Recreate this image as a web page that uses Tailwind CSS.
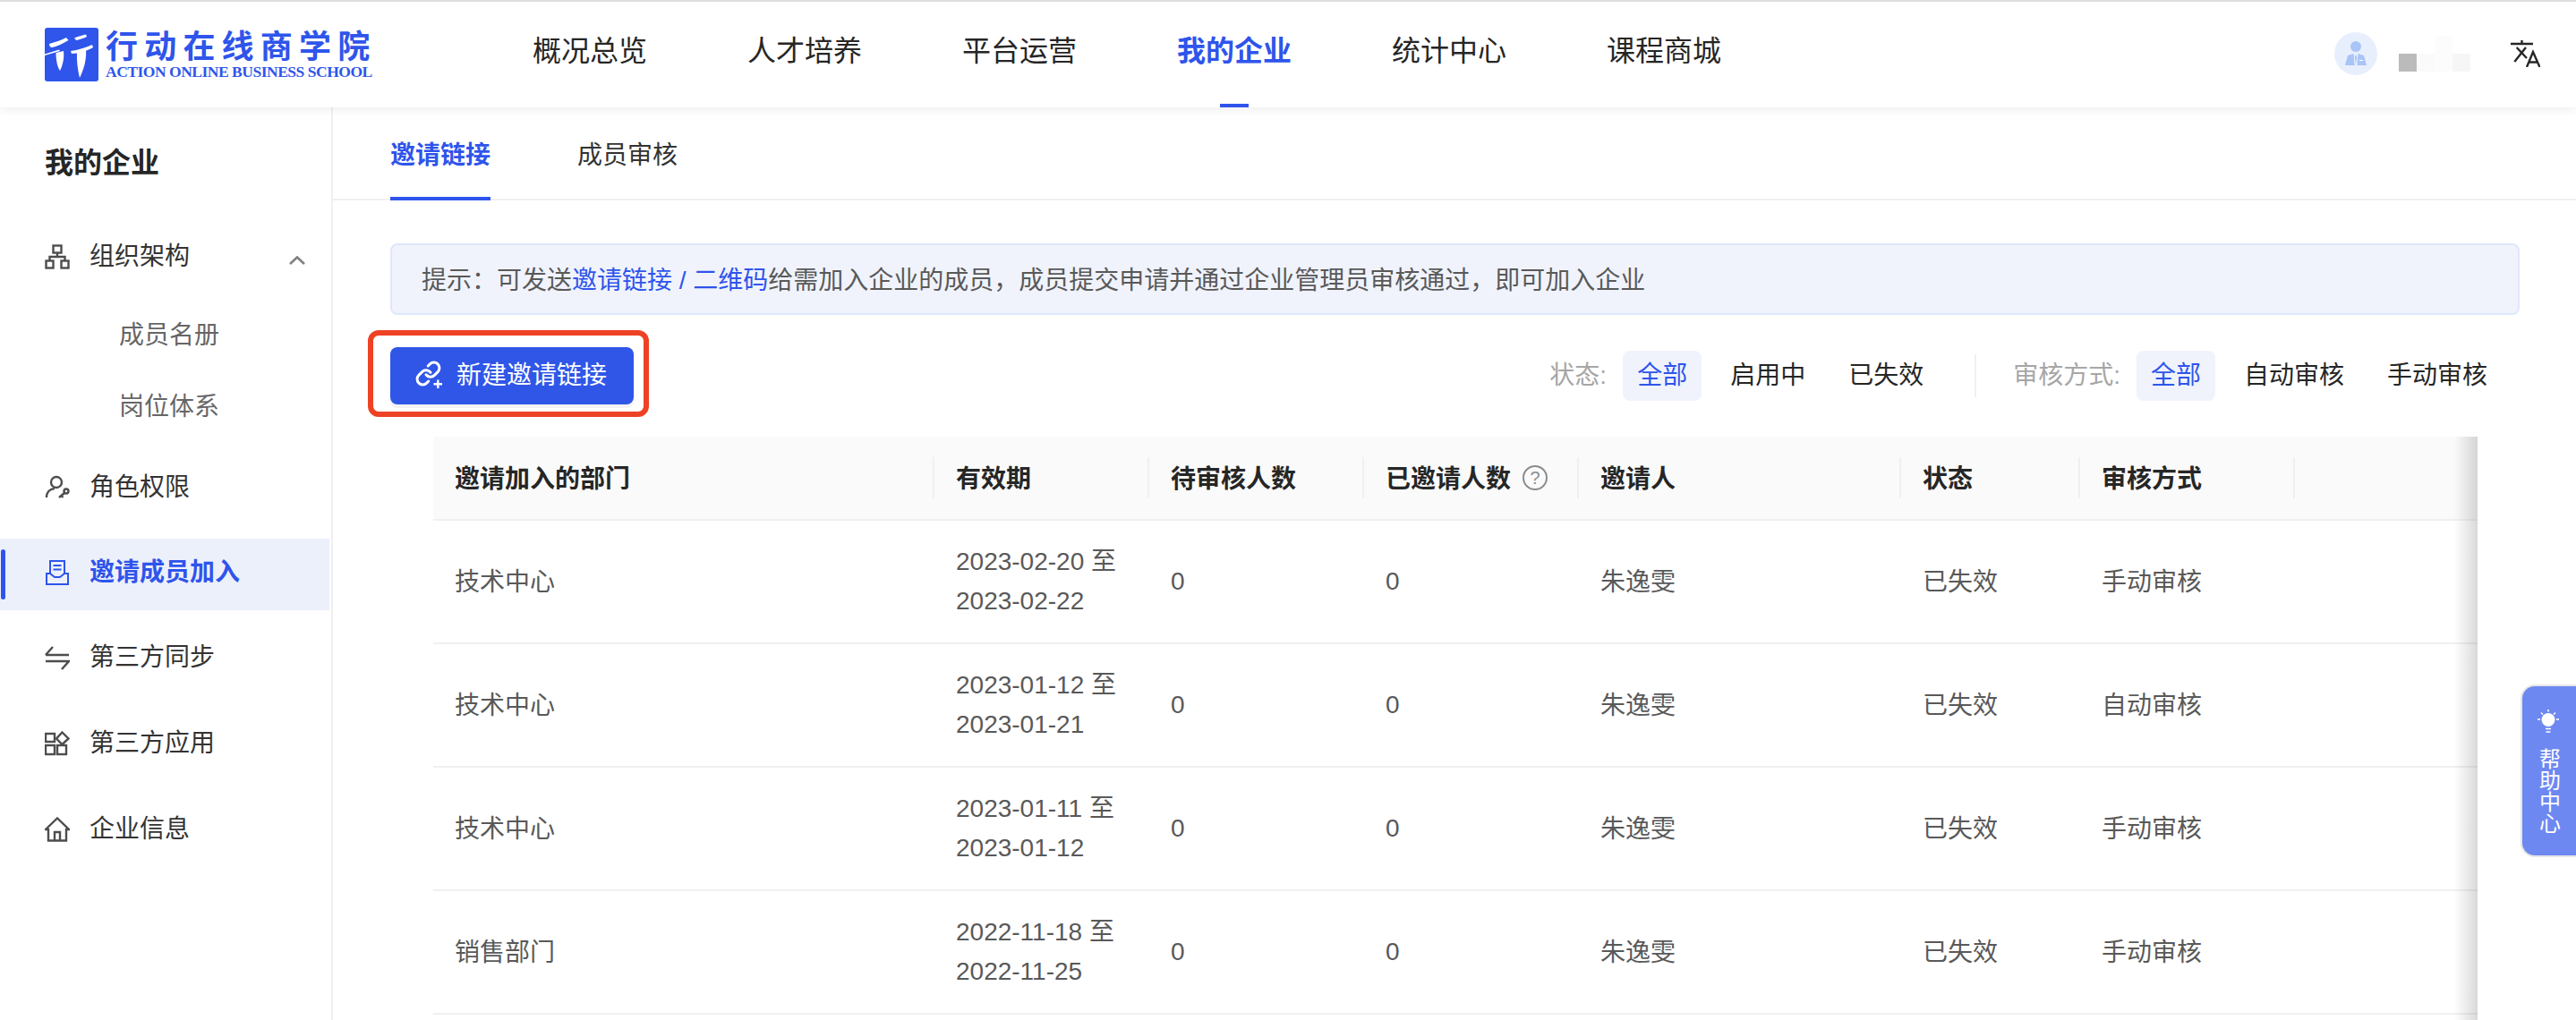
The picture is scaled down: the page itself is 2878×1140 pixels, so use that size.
<!DOCTYPE html>
<html lang="zh-CN">
  <head>
    <meta charset="UTF-8" />
    <title>邀请链接</title>
    <script src="https://cdn.jsdelivr.net/npm/@tailwindcss/browser@4"></script>
  </head>
  <body class="bg-white font-['Liberation_Sans','Noto_Sans_CJK_SC',sans-serif] text-[#262626]">
    <div class="relative flex flex-col w-[2878px] h-[1140px] overflow-hidden">
      <!-- top bar -->
      <header class="relative z-10 flex items-center h-[120px] shrink-0 border-t-2 border-[#dedede] bg-white shadow-[0_2px_10px_rgba(0,0,0,0.08)]">
        <div class="flex items-center w-[595px] shrink-0 pl-[50px]">
          <svg class="w-[60px] h-[60px] shrink-0" viewBox="0 0 60 60">
            <rect width="60" height="60" rx="3" fill="#2f55eb" />
            <g fill="#fff">
              <path d="M5 18 C11 16 19 14 24 11 L26.5 14 C20 18 13 21 8 22 C6 22 5 20 5 18 Z" />
              <path d="M33 11.5 C37 10 42 8 46 7.5 L47 10 C43 12 38 13.5 35 14 Z" />
              <path d="M0 29.5 L16 24.5 L17 26 L0 31 Z" />
              <path d="M29 26 C37 25 46 22 53 19 L54 22 C47 26 38 29 30 29 Z" />
              <path d="M12.5 28 L21 26 C22 34 20 42 17 48 C14 44 12.5 36 12.5 28 Z" />
              <path d="M36 28 L46 25 C47 36 43 48 39 56 C37 48 35.5 37 36 28 Z" />
            </g>
          </svg>
          <div class="ml-2 flex flex-col text-[#2f55eb]">
            <span class="text-[36px] leading-[38px] font-bold tracking-[7.2px] whitespace-nowrap">行动在线商学院</span>
            <span class="font-['Liberation_Serif',serif] text-[17.5px] leading-[17px] font-bold tracking-[-0.48px] whitespace-nowrap">ACTION ONLINE BUSINESS SCHOOL</span>
          </div>
        </div>
        <nav class="flex h-full gap-[112px] text-[32px]">
          <a class="flex items-center pb-2">概况总览</a>
          <a class="flex items-center pb-2">人才培养</a>
          <a class="flex items-center pb-2">平台运营</a>
          <a class="relative flex items-center pb-2 font-semibold text-[#2f54eb]">
            我的企业
            <span class="absolute left-[48px] bottom-0 w-8 h-1 bg-[#2f54eb]"></span>
          </a>
          <a class="flex items-center pb-2">统计中心</a>
          <a class="flex items-center pb-2">课程商城</a>
        </nav>
        <div class="ml-auto flex items-center pr-[40px] pb-[2px]">
          <div class="w-12 h-12 rounded-full bg-[#e8effc]">
            <svg class="w-12 h-12" viewBox="0 0 48 48" fill="#a9c4f6">
              <circle cx="24" cy="16" r="6" />
              <path d="M12 37 L15 26 L21.5 24 L22.5 37 Z" />
              <path d="M36 37 L33 26 L26.5 24 L25.5 37 Z" />
              <path d="M24 25 L22.8 28 L24 36 L25.2 28 Z" />
              <rect x="28" y="31" width="4" height="1" fill="#fff" />
            </svg>
          </div>
          <!-- blurred user name -->
          <div class="ml-6 grid grid-cols-[20px_20px_20px_20px] grid-rows-[20px_20px] w-[80px] h-10">
            <span></span><span></span><span class="bg-[#fcfcfc]"></span><span></span>
            <span class="bg-[#bbbbbb]"></span><span class="bg-[#fafafa]"></span><span class="bg-[#fcfcfc]"></span><span class="bg-[#f6f6f6]"></span>
          </div>
          <svg class="ml-[45px] w-[33px] h-[30px]" viewBox="0 0 33 30" fill="none" stroke="#262626" stroke-width="2.4">
            <path d="M0 4 H25 M12.5 0 V4 M6.7 8 L18 20 M17 8 L4.3 24" />
            <path d="M18 30 L25 13 L32.5 30 M20.5 24.5 H30" />
          </svg>
        </div>
      </header>

      <div class="flex flex-1 min-h-0">
        <!-- sidebar -->
        <aside class="w-[372px] shrink-0 border-r-2 border-[#f0f0f0] text-[28px] text-[#333]">
          <h2 class="pt-10 pl-[50px] text-[32px] leading-[44px] font-semibold text-[#262626]">我的企业</h2>
          <div class="mt-[43px] flex items-center w-[368px] h-20 pl-[50px]">
            <svg class="w-7 h-7" viewBox="0 0 28 28" fill="none" stroke="#4d4d4d" stroke-width="2.4">
              <rect x="9.5" y="1.5" width="9" height="8" />
              <rect x="1.5" y="18.5" width="8" height="8" />
              <rect x="18.5" y="18.5" width="8" height="8" />
              <path d="M14 9.5 V14 M5.5 18.5 V14 H22.5 V18.5" />
            </svg>
            <span class="ml-[22px]">组织架构</span>
            <svg class="ml-auto mr-[27px] mt-2 w-[18px] h-[10px]" viewBox="0 0 18 10" fill="none" stroke="#808080" stroke-width="2.6">
              <path d="M1 9 L9 1.5 L17 9" />
            </svg>
          </div>
          <div class="mt-2 flex items-center h-20 pl-[133px] text-[#666]">成员名册</div>
          <div class="flex items-center h-20 pl-[133px] text-[#666]">岗位体系</div>
          <div class="mt-[10px] flex items-center w-[368px] h-20 pl-[50px]">
            <svg class="w-7 h-7" viewBox="0 0 28 28" fill="none" stroke="#4d4d4d" stroke-width="2.4">
              <circle cx="13" cy="8" r="6" />
              <path d="M2 25 C2 19 6 15.5 11 15" />
              <circle cx="24" cy="18" r="2.5" />
              <path d="M22 20 L16 25 M18.5 23 L20.5 25" />
            </svg>
            <span class="ml-[22px]">角色权限</span>
          </div>
          <div class="relative mt-[17px] flex items-center w-[368px] h-20 pl-[50px] pb-1 bg-[#ecf0fb] font-semibold text-[#2f54eb]">
            <span class="absolute left-[1px] top-3 w-[5px] h-14 rounded-[3px] bg-[#2f54eb]"></span>
            <svg class="w-7 h-7" viewBox="0 0 28 28" fill="none" stroke="#2f54eb" stroke-width="2">
              <path d="M6 15 V1 H22 V15 M9.5 6 H18.5 M9.5 10.5 H18.5" />
              <path d="M2 15 H6 L11 19 H17 L22 15 H26 V27 H2 Z" />
            </svg>
            <span class="ml-[22px]">邀请成员加入</span>
          </div>
          <div class="mt-[13px] flex items-center w-[368px] h-20 pl-[50px]">
            <svg class="w-7 h-7" viewBox="0 0 28 28" fill="none" stroke="#4d4d4d" stroke-width="2.4">
              <path d="M1 11 H27 M1 11 L9 2 M1 18 H27 L19 27" />
            </svg>
            <span class="ml-[22px]">第三方同步</span>
          </div>
          <div class="mt-4 flex items-center w-[368px] h-20 pl-[50px]">
            <svg class="w-7 h-7" viewBox="0 0 28 28" fill="none" stroke="#4d4d4d" stroke-width="2.4">
              <rect x="1" y="3" width="10" height="9" />
              <rect x="1" y="16" width="10" height="10" />
              <rect x="14" y="16" width="10" height="10" />
              <path d="M19.5 1.5 L26.5 8.5 L19.5 15 L13 8.5 Z" />
            </svg>
            <span class="ml-[22px]">第三方应用</span>
          </div>
          <div class="mt-4 flex items-center w-[368px] h-20 pl-[50px]">
            <svg class="w-7 h-7" viewBox="0 0 28 28" fill="none" stroke="#4d4d4d" stroke-width="2.4">
              <path d="M1 14 L14 1.5 L27 14 H24 V26.5 H4 V14 Z" />
              <path d="M11 26.5 V17 H17 V26.5" />
            </svg>
            <span class="ml-[22px]">企业信息</span>
          </div>
        </aside>

        <!-- content -->
        <main class="flex-1 min-w-0 text-[28px]">
          <div class="flex h-[104px] gap-[97px] px-16 border-b-2 border-[#f0f0f0]">
            <a class="relative flex items-center pt-[6px] font-semibold text-[#2f54eb]">
              邀请链接
              <span class="absolute left-0 right-0 bottom-[-2px] h-1 bg-[#2f54eb]"></span>
            </a>
            <a class="flex items-center pt-[6px] text-[#333]">成员审核</a>
          </div>

          <div class="ml-16 mt-12 flex items-center w-[2379px] h-20 pl-[33px] pt-[3px] rounded-lg border-2 border-[#e0e7fb] bg-[#f0f3fc] text-[#595959]">
            提示：可发送<span class="text-[#2f54eb]">邀请链接 / 二维码</span>给需加入企业的成员，成员提交申请并通过企业管理员审核通过，即可加入企业
          </div>

          <div class="ml-16 mt-9 flex items-center justify-between w-[2359px] h-16">
            <div class="relative">
              <button class="flex items-center w-[272px] h-16 pl-[30px] rounded-lg bg-[#3056e8] text-white shadow-[0_4px_0_#f2f2f2]">
                <svg class="w-7 h-7 overflow-visible" viewBox="0 0 28 28" fill="none" stroke="#fff" stroke-linecap="round">
                  <g transform="translate(-2.5 -3.5) scale(1.25)" stroke-width="2.4">
                    <path d="M10 13a5 5 0 0 0 7.54.54l3-3a5 5 0 0 0-7.07-7.07l-1.72 1.71" />
                    <path d="M14 11a5 5 0 0 0-7.54-.54l-3 3a5 5 0 0 0 7.07 7.07l1.71-1.71" />
                  </g>
                  <path d="M23.3 18.5 V28 M18.5 23.3 H28" stroke-width="2.4" stroke-linecap="butt" />
                </svg>
                <span class="ml-4">新建邀请链接</span>
              </button>
              <span class="absolute left-[-25px] right-[-17px] top-[-19px] bottom-[-14px] rounded-xl border-[6px] border-[#ee4225]"></span>
            </div>
            <div class="flex items-center">
              <span class="text-[#a6a6a6] mr-[18px]">状态:</span>
              <div class="flex gap-4">
                <span class="flex items-center h-14 px-4 rounded-lg bg-[#f0f3fc] text-[#2f54eb]">全部</span>
                <span class="flex items-center h-14 px-4">启用中</span>
                <span class="flex items-center h-14 px-4">已失效</span>
              </div>
              <span class="mx-[41px] w-[2px] h-12 bg-[#f0f0f0]"></span>
              <span class="text-[#a6a6a6] mr-[18px]">审核方式:</span>
              <div class="flex gap-4">
                <span class="flex items-center h-14 px-4 rounded-lg bg-[#f0f3fc] text-[#2f54eb]">全部</span>
                <span class="flex items-center h-14 px-4">自动审核</span>
                <span class="flex items-center h-14 px-4">手动审核</span>
              </div>
            </div>
          </div>

          <div class="relative ml-[112px] mt-9 w-[2284px] overflow-hidden">
            <div class="grid grid-cols-[560px_240px_240px_240px_360px_200px_240px_204px] items-center h-[94px] bg-[#fafafa] border-b-2 border-[#f0f0f0] font-semibold">
              <div class="flex items-center h-[46px] pl-6 pt-1 border-r-2 border-[#f0f0f0]">邀请加入的部门</div>
              <div class="flex items-center h-[46px] pl-6 pt-1 border-r-2 border-[#f0f0f0]">有效期</div>
              <div class="flex items-center h-[46px] pl-6 pt-1 border-r-2 border-[#f0f0f0]">待审核人数</div>
              <div class="flex items-center h-[46px] pl-6 border-r-2 border-[#f0f0f0]">
                <span class="pt-1">已邀请人数</span>
                <span class="ml-[13px] flex items-center justify-center w-7 h-7 rounded-full border-2 border-[#8c8c8c] text-[20px] font-normal text-[#8c8c8c]">?</span>
              </div>
              <div class="flex items-center h-[46px] pl-6 pt-1 border-r-2 border-[#f0f0f0]">邀请人</div>
              <div class="flex items-center h-[46px] pl-6 pt-1 border-r-2 border-[#f0f0f0]">状态</div>
              <div class="flex items-center h-[46px] pl-6 pt-1 border-r-2 border-[#f0f0f0]">审核方式</div>
              <div></div>
            </div>

            <div class="grid grid-cols-[560px_240px_240px_240px_360px_200px_240px_204px] items-center h-[138px] border-b-2 border-[#f0f0f0] text-[#595959]">
              <div class="pl-6 pt-[2px]">技术中心</div>
              <div class="pl-6 leading-[44px]">2023-02-20 至<br />2023-02-22</div>
              <div class="pl-6">0</div>
              <div class="pl-6">0</div>
              <div class="pl-6 pt-[2px]">朱逸雯</div>
              <div class="pl-6 pt-[2px]">已失效</div>
              <div class="pl-6 pt-[2px]">手动审核</div>
              <div></div>
            </div>
            <div class="grid grid-cols-[560px_240px_240px_240px_360px_200px_240px_204px] items-center h-[138px] border-b-2 border-[#f0f0f0] text-[#595959]">
              <div class="pl-6 pt-[2px]">技术中心</div>
              <div class="pl-6 leading-[44px]">2023-01-12 至<br />2023-01-21</div>
              <div class="pl-6">0</div>
              <div class="pl-6">0</div>
              <div class="pl-6 pt-[2px]">朱逸雯</div>
              <div class="pl-6 pt-[2px]">已失效</div>
              <div class="pl-6 pt-[2px]">自动审核</div>
              <div></div>
            </div>
            <div class="grid grid-cols-[560px_240px_240px_240px_360px_200px_240px_204px] items-center h-[138px] border-b-2 border-[#f0f0f0] text-[#595959]">
              <div class="pl-6 pt-[2px]">技术中心</div>
              <div class="pl-6 leading-[44px]">2023-01-11 至<br />2023-01-12</div>
              <div class="pl-6">0</div>
              <div class="pl-6">0</div>
              <div class="pl-6 pt-[2px]">朱逸雯</div>
              <div class="pl-6 pt-[2px]">已失效</div>
              <div class="pl-6 pt-[2px]">手动审核</div>
              <div></div>
            </div>
            <div class="grid grid-cols-[560px_240px_240px_240px_360px_200px_240px_204px] items-center h-[138px] border-b-2 border-[#f0f0f0] text-[#595959]">
              <div class="pl-6 pt-[2px]">销售部门</div>
              <div class="pl-6 leading-[44px]">2022-11-18 至<br />2022-11-25</div>
              <div class="pl-6">0</div>
              <div class="pl-6">0</div>
              <div class="pl-6 pt-[2px]">朱逸雯</div>
              <div class="pl-6 pt-[2px]">已失效</div>
              <div class="pl-6 pt-[2px]">手动审核</div>
              <div></div>
            </div>
            <div class="h-3"></div>

            <!-- fixed column shadow -->
            <span class="absolute top-0 bottom-0 right-0 w-[26px] bg-linear-to-r from-transparent to-black/15"></span>
          </div>
        </main>
      </div>

      <!-- help tab -->
      <div class="absolute right-0 top-[765px] flex flex-col items-center w-[62px] h-[193px] pt-[26px] pr-[2px] rounded-l-2xl border-2 border-r-0 border-[#e5e5e5] bg-[#6e88f1] text-white">
        <svg class="w-6 h-[26px]" viewBox="0 0 24 26" fill="none" stroke="#fff" stroke-width="1.6">
          <circle cx="12" cy="11.5" r="7.5" fill="#fff" stroke="none" />
          <path d="M0 11 H3 M21 11 H24 M4 3.5 L6 5.5 M20 3.5 L18 5.5 M12 0 V2.5 M9 21.5 H15 M9.5 25 H14.5" />
        </svg>
        <span class="mt-[17px] text-[24px] leading-[23px] [writing-mode:vertical-rl]">帮助中心</span>
      </div>
    </div>
  </body>
</html>
